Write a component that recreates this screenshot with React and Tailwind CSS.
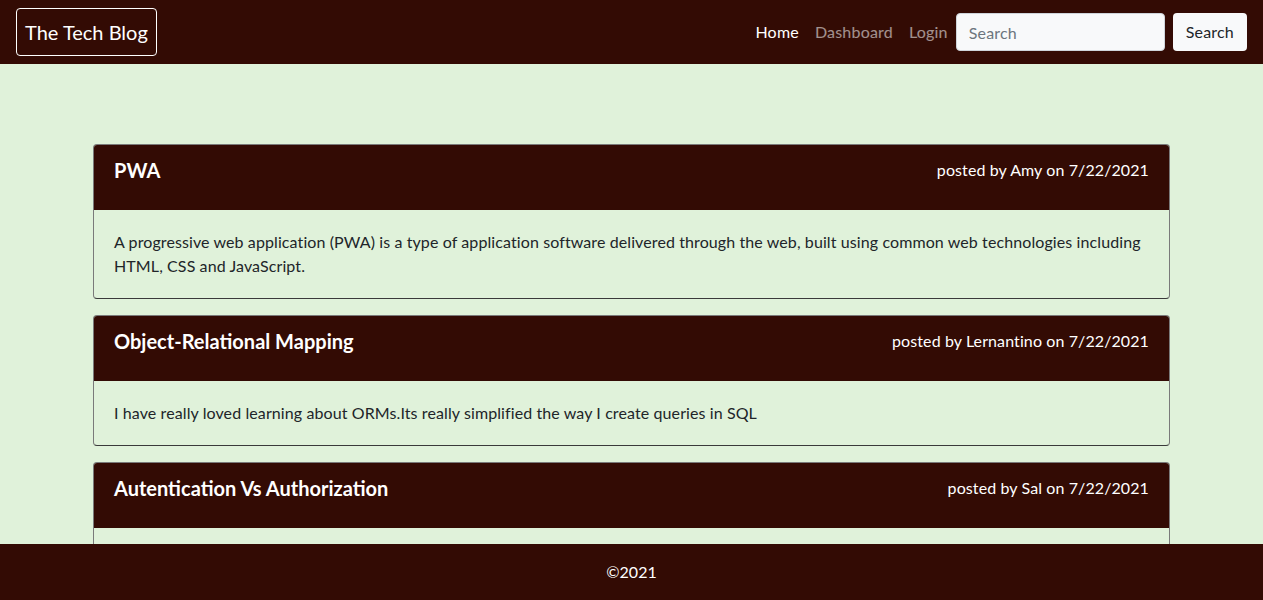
export default function App() {
    const posts = [
        {
            title: 'PWA',
            author: 'Amy',
            date: '7/22/2021',
            body: 'A progressive web application (PWA) is a type of application software delivered through the web, built using common web technologies including HTML, CSS and JavaScript.',
        },
        {
            title: 'Object-Relational Mapping',
            author: 'Lernantino',
            date: '7/22/2021',
            body: 'I have really loved learning about ORMs.Its really simplified the way I create queries in SQL',
        },
        {
            title: 'Autentication Vs Authorization',
            author: 'Sal',
            date: '7/22/2021',
            body: 'Authentication is the process of verifying who a user is, while authorization is the process of verifying what they have access to.',
        },
    ];

    return (
        <div className="min-h-screen bg-[#e0f2da] text-[#212529] font-['Lato',sans-serif]">
            {/* Navbar */}
            <nav className="h-16 bg-[#330b04] flex items-center justify-between px-4">
                <a className="text-white text-xl border border-white rounded px-2 py-[7px] leading-8">
                    The Tech Blog
                </a>
                <div className="flex items-center tracking-[0.2px]">
                    <a className="text-white px-2">Home</a>
                    <a className="text-white/55 px-2">Dashboard</a>
                    <a className="text-white/55 px-2">Login</a>
                    <input
                        placeholder="Search"
                        className="w-[209px] h-[38px] bg-[#f8f9fa] rounded px-3 text-base text-[#212529] placeholder:text-[#6c757d] border border-[#ced4da] outline-none"
                    />
                    <button className="ml-2 h-[38px] bg-[#f8f9fa] rounded px-[13px] text-[#212529]">
                        Search
                    </button>
                </div>
            </nav>

            {/* Posts */}
            <main className="max-w-[1109px] mx-auto px-4 pt-20 pb-20">
                {posts.map((post) => (
                    <div
                        key={post.title}
                        className="mb-4 border border-[#7a7a7a] border-b-[#3a3a3a] rounded overflow-hidden"
                    >
                        <div className="bg-[#330b04] text-white h-[65px] flex justify-between items-start px-5 pt-[12px]">
                            <h2 className="text-xl font-bold leading-[26px]">{post.title}</h2>
                            <span className="leading-[26px] tracking-[0.1px]">
                                posted by {post.author} on {post.date}
                            </span>
                        </div>
                        <div className="px-5 py-5 leading-6 tracking-[0.1px]">{post.body}</div>
                    </div>
                ))}
            </main>

            {/* Footer */}
            <footer className="fixed bottom-0 left-0 right-0 h-14 bg-[#330b04] text-white flex items-center justify-center">
                ©2021
            </footer>
        </div>
    );
}
